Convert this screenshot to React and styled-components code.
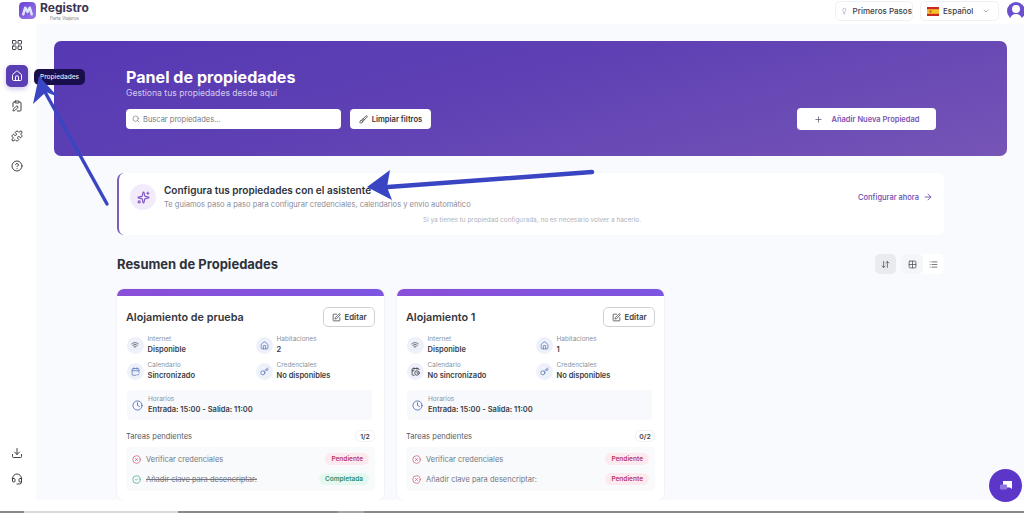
import React from 'react'
import styled, { createGlobalStyle } from 'styled-components'
import {
  ArrowDownUp, ArrowRight, Brush, CalendarCheck2, CalendarClock, ChevronDown, CircleCheck, CircleHelp, CircleX, Clock,
  ClipboardPen, Download, Grid2x2, Headset, House, Key, LayoutGrid, Lightbulb, List, Plus, Puzzle, Search,
  Sparkles, SquarePen, Wifi,
} from 'lucide-react'

const GlobalStyle = createGlobalStyle`
  html, body { margin: 0; padding: 0; background: #fff; }
  body { font-family: Inter, "Liberation Sans", sans-serif; color: #2b2f38; }
  * { box-sizing: border-box; }
`

const Page = styled.div`
  position: relative;
  width: 1024px;
  height: 513px;
  overflow: hidden;
  display: flex;
  flex-direction: column;
  background: #fff;
`

const Header = styled.header`
  height: 24px;
  flex: none;
  display: flex;
  align-items: flex-start;
  justify-content: space-between;
  padding-left: 19px;
`

const Brand = styled.div`
  display: flex;
  gap: 4px;
  padding-top: 2px;
`

const BrandText = styled.div`
  display: flex;
  flex-direction: column;
  align-items: center;
  margin-top: -2px;
`

const BrandName = styled.span`
  font-size: 12px;
  line-height: 15px;
  font-weight: 700;
  color: #3b3450;
`

const BrandSub = styled.span`
  margin-top: 1px;
  font-size: 4.4px;
  line-height: 5px;
  color: #777;
`

const HeaderRight = styled.div`
  display: flex;
  align-items: center;
  padding-top: 1px;
`

const HeaderButton = styled.div`
  height: 20px;
  display: flex;
  align-items: center;
  border: 1px solid #f0f1f5;
  border-radius: 5px;
  background: #fff;
  font-size: 8px;
  font-weight: 500;
  white-space: nowrap;
  color: #3a3d45;
`

const StepsButton = styled(HeaderButton)`
  width: 78px;
  padding-left: 5px;
  gap: 5px;
  margin-right: 7px;
`

const LanguageButton = styled(HeaderButton)`
  width: 79px;
  padding-left: 6px;
  gap: 4px;
  margin-right: 8px;
`

const LanguageChevron = styled.span`
  display: flex;
  margin-left: auto;
  margin-right: 8px;
  color: #888;
`

const Avatar = styled.div`
  width: 17px;
  height: 20px;
  overflow: hidden;
`

const Body = styled.div`
  flex: 1;
  min-height: 0;
  display: flex;
`

const Sidebar = styled.aside`
  width: 36px;
  flex: none;
  display: flex;
  flex-direction: column;
  align-items: center;
  padding: 10px 2px 10px 0;
  background: #fff;
`

const SideItem = styled.div`
  width: 22px;
  height: 22px;
  flex: none;
  display: flex;
  align-items: center;
  justify-content: center;
  margin-bottom: ${(p) => p.$gap ?? 8}px;
  border-radius: 5px;
  color: ${(p) => (p.$active ? '#fff' : '#3d4048')};
  background: ${(p) => (p.$active ? '#5a3eb3' : 'transparent')};
  box-shadow: ${(p) => (p.$active ? '0 2px 5px rgba(90,62,179,.3)' : 'none')};
`

const SideSpacer = styled.div`
  flex: 1;
`

const Tooltip = styled.div`
  position: absolute;
  left: 34px;
  top: 69px;
  height: 16px;
  width: 51px;
  display: flex;
  align-items: center;
  justify-content: center;
  border-radius: 5px;
  background: #1a0f4d;
  color: #e8e6f2;
  font-size: 6.5px;
  font-weight: 500;
`

const Main = styled.main`
  flex: 1;
  min-width: 0;
  height: 476px;
  overflow: hidden;
  padding: 17px 17px 0 18px;
  background: #f9fafd;
`

const Hero = styled.section`
  height: 115px;
  display: flex;
  flex-direction: column;
  padding: 27px 71px 0 72px;
  border-radius: 7px;
  background: linear-gradient(165deg, #5638b4 0%, #5f41b4 45%, #7655b6 100%);
`

const HeroTitle = styled.h1`
  margin: 0;
  font-size: 16.1px;
  line-height: 19px;
  font-weight: 700;
  color: #fff;
`

const HeroSub = styled.p`
  margin: 0;
  font-size: 8.6px;
  line-height: 12px;
  color: #d5cdea;
`

const HeroRow = styled.div`
  display: flex;
  align-items: center;
  margin-top: 9px;
`

const SearchBox = styled.div`
  width: 215px;
  height: 20px;
  display: flex;
  align-items: center;
  gap: 3px;
  padding-left: 6px;
  border-radius: 4px;
  background: #fff;
  font-size: 7.5px;
  color: #777a84;
`

const ClearButton = styled.div`
  height: 20px;
  width: 81px;
  margin-left: 9px;
  display: flex;
  align-items: center;
  justify-content: center;
  gap: 4px;
  border-radius: 4px;
  background: #fff;
  font-size: 7.6px;
  font-weight: 600;
  color: #30333b;
`

const AddButton = styled.div`
  width: 139px;
  height: 22px;
  margin-left: auto;
  display: flex;
  align-items: center;
  justify-content: center;
  gap: 9px;
  border-radius: 4px;
  background: #fff;
  font-size: 7.5px;
  font-weight: 600;
  color: #7d52b0;
`

const AddIcon = styled.span`
  display: flex;
  color: #5b5470;
`

const Content = styled.div`
  margin: 17px 63px 0;
`

const Wizard = styled.section`
  position: relative;
  height: 62px;
  display: flex;
  align-items: flex-start;
  padding: 11px 11px 0 11px;
  border-left: 2px solid #7c5cbc;
  border-radius: 7px;
  background: #fff;
`

const WizardIcon = styled.div`
  width: 26px;
  height: 26px;
  flex: none;
  display: flex;
  align-items: center;
  justify-content: center;
  border-radius: 50%;
  background: #f1ebfb;
  color: #7b4fc4;
`

const WizardText = styled.div`
  margin-left: 8px;
`

const WizardTitle = styled.h2`
  margin: 0;
  font-size: 10px;
  line-height: 13px;
  font-weight: 600;
  color: #2e313a;
`

const WizardDesc = styled.p`
  margin: 2px 0 0;
  font-size: 7.55px;
  line-height: 12px;
  color: #8a8d96;
`

const WizardNote = styled.span`
  position: absolute;
  left: 304px;
  top: 43px;
  font-size: 6.45px;
  line-height: 9px;
  color: #b0b2b9;
`

const WizardLink = styled.div`
  margin-left: auto;
  margin-top: 8px;
  display: flex;
  align-items: center;
  gap: 4px;
  font-size: 7.5px;
  font-weight: 500;
  color: #6a4bb0;
`

const SummaryRow = styled.div`
  display: flex;
  align-items: center;
  justify-content: space-between;
  height: 22px;
  margin-top: 18px;
`

const SummaryTitle = styled.h2`
  margin: 0;
  font-size: 13px;
  font-weight: 700;
  color: #2f323a;
`

const ViewControls = styled.div`
  display: flex;
  align-items: center;
  gap: 6px;
`

const ViewButton = styled.div`
  width: 21px;
  height: 20px;
  display: flex;
  align-items: center;
  justify-content: center;
  border-radius: 5px;
  color: #4b4e56;
  background: ${(p) => p.$tone || 'transparent'};
`

const ViewGroup = styled.div`
  display: flex;
  border-radius: 5px;
  background: #fff;
`

const Cards = styled.div`
  display: grid;
  grid-template-columns: 267px 267px;
  column-gap: 13px;
  margin-top: 14px;
`

const Card = styled.article`
  height: 211px;
  overflow: hidden;
  border-radius: 7px;
  background: #fff;
  box-shadow: 0 0 0 1px #f2f3f7;
`

const CardBar = styled.div`
  height: 7px;
  background: linear-gradient(90deg, #8a4fd8, #7d55e0);
`

const CardBody = styled.div`
  padding: 0 9px;
`

const CardHead = styled.div`
  display: flex;
  align-items: center;
  justify-content: space-between;
  margin-top: 11px;
`

const CardTitle = styled.h3`
  margin: 0;
  font-size: 10.8px;
  font-weight: 600;
  color: #33363e;
`

const EditButton = styled.div`
  width: 52px;
  height: 20px;
  display: flex;
  align-items: center;
  justify-content: center;
  gap: 4px;
  border: 1px solid #cfd1d6;
  border-radius: 5px;
  font-size: 7.8px;
  font-weight: 600;
  color: #3a3d45;
`

const Facts = styled.div`
  display: grid;
  grid-template-columns: 129px 1fr;
  row-gap: 6px;
  margin-top: 8px;
  padding-left: 0.5px;
`

const Fact = styled.div`
  display: flex;
  align-items: center;
  gap: 4px;
`

const FactIcon = styled.div`
  width: 17px;
  height: 17px;
  flex: none;
  display: flex;
  align-items: center;
  justify-content: center;
  border-radius: 50%;
  background: #eef1fa;
  color: ${(p) => p.$tone || '#5775b8'};
`

const FactText = styled.div`
  display: flex;
  flex-direction: column;
`

const FactLabel = styled.span`
  font-size: 6.5px;
  line-height: 9px;
  color: #8e9199;
`

const FactValue = styled.span`
  margin-top: 1px;
  font-size: 7.5px;
  line-height: 10px;
  font-weight: 600;
  color: #3a3d45;
`

const Schedule = styled.div`
  height: 30px;
  margin: 9px 3px 0 1px;
  display: flex;
  align-items: center;
  gap: 5px;
  padding-left: 5px;
  border-radius: 4px;
  background: #f8f9fc;
  color: #5775b8;
`

const TasksHead = styled.div`
  display: flex;
  align-items: center;
  justify-content: space-between;
  height: 12px;
  margin-top: 10px;
  font-size: 7.6px;
  color: #595c64;
`

const TaskCount = styled.span`
  width: 20px;
  height: 12px;
  display: flex;
  align-items: center;
  justify-content: center;
  border: 1px solid #f1f2f5;
  border-radius: 5px;
  font-size: 6.8px;
  font-weight: 600;
  color: #3a3d45;
`

const Tasks = styled.div`
  margin-top: 5px;
  padding: 2px 6px;
  border-radius: 4px;
  background: #f9fafc;
`

const Task = styled.div`
  height: 20px;
  display: flex;
  align-items: center;
  gap: 5px;
  color: ${(p) => (p.$done ? '#41ab85' : '#d0607f')};
`

const TaskName = styled.span`
  font-size: 7.5px;
  color: #73767e;
  text-decoration: ${(p) => (p.$done ? 'line-through' : 'none')};
`

const Badge = styled.span`
  margin-left: auto;
  padding: 0 6px;
  height: 12px;
  display: flex;
  align-items: center;
  border-radius: 6px;
  font-size: 6.5px;
  font-weight: 600;
  color: ${(p) => (p.$done ? '#2f8f6e' : '#b8395f')};
  background: ${(p) => (p.$done ? '#e4f8f0' : '#fdeaee')};
`

const FooterBar = styled.div`
  height: 13px;
  flex: none;
  display: flex;
  flex-direction: column;
  justify-content: flex-end;
`

const FooterLine = styled.div`
  height: 2px;
  background: linear-gradient(90deg, #8a8a8c 24px, #d9d9da 24px, #d9d9da 178px, #8a8a8c 178px, #8a8a8c 338px, #a5a5a6 338px, #a5a5a6 364px, #8a8a8c 364px);
`

const ChatBubble = styled.div`
  position: absolute;
  left: 989px;
  top: 469px;
  width: 33px;
  height: 33px;
  display: flex;
  align-items: center;
  justify-content: center;
  border-radius: 50%;
  background: #5b36c9;
`

const Annotations = styled.svg`
  position: absolute;
  inset: 0;
  pointer-events: none;
`

const LogoMark = () => (
  <svg width="17" height="17" viewBox="0 0 18 18">
    <defs>
      <linearGradient id="logoBg" x1="0" y1="0" x2="1" y2="1">
        <stop offset="0" stopColor="#6a3fd6" />
        <stop offset="1" stopColor="#9b7be8" />
      </linearGradient>
    </defs>
    <rect width="18" height="18" rx="4.5" fill="url(#logoBg)" />
    <path d="M4.5 13 6.6 6 9 10.5 11.4 6 13.5 13" fill="none" stroke="#dfe6ff" strokeWidth="2.6" strokeLinejoin="round" strokeLinecap="round" />
  </svg>
)

const Flag = () => (
  <svg width="12" height="9" viewBox="0 0 12 9">
    <rect width="12" height="9" fill="#c8281e" />
    <rect y="2.2" width="12" height="4.6" fill="#f6c02c" />
    <rect x="2.6" y="3.4" width="1.8" height="2.2" fill="#b5522a" />
  </svg>
)

const UserAvatar = () => (
  <svg width="18" height="20" viewBox="0 0 18 20">
    <circle cx="9" cy="10" r="9" fill="#6a4fd0" />
    <circle cx="9" cy="8" r="4" fill="#fff" />
    <path d="M3 18c.8-3.4 3-5 6-5s5.2 1.6 6 5v2H3z" fill="#fff" />
  </svg>
)

const properties = [
  {
    name: 'Alojamiento de prueba', rooms: '2', calendar: 'Sincronizado', CalendarIcon: CalendarCheck2, calendarTone: '#5775b8', count: '1/2',
    tasks: [
      { name: 'Verificar credenciales', done: false },
      { name: 'Añadir clave para desencriptar:', done: true },
    ],
  },
  {
    name: 'Alojamiento 1', rooms: '1', calendar: 'No sincronizado', CalendarIcon: CalendarClock, calendarTone: '#30333b', count: '0/2',
    tasks: [
      { name: 'Verificar credenciales', done: false },
      { name: 'Añadir clave para desencriptar:', done: false },
    ],
  },
]

const PropertyCard = ({ data }) => {
  const { CalendarIcon } = data
  return (
    <Card>
      <CardBar />
      <CardBody>
        <CardHead>
          <CardTitle>{data.name}</CardTitle>
          <EditButton><SquarePen size={9} />Editar</EditButton>
        </CardHead>
        <Facts>
          <Fact>
            <FactIcon $tone="#3d4048"><Wifi size={8} /></FactIcon>
            <FactText><FactLabel>Internet</FactLabel><FactValue>Disponible</FactValue></FactText>
          </Fact>
          <Fact>
            <FactIcon><House size={9} /></FactIcon>
            <FactText><FactLabel>Habitaciones</FactLabel><FactValue>{data.rooms}</FactValue></FactText>
          </Fact>
          <Fact>
            <FactIcon $tone={data.calendarTone}><CalendarIcon size={9} /></FactIcon>
            <FactText><FactLabel>Calendario</FactLabel><FactValue>{data.calendar}</FactValue></FactText>
          </Fact>
          <Fact>
            <FactIcon><Key size={9} /></FactIcon>
            <FactText><FactLabel>Credenciales</FactLabel><FactValue>No disponibles</FactValue></FactText>
          </Fact>
        </Facts>
        <Schedule>
          <Clock size={11} />
          <FactText><FactLabel>Horarios</FactLabel><FactValue>Entrada: 15:00 - Salida: 11:00</FactValue></FactText>
        </Schedule>
        <TasksHead>Tareas pendientes<TaskCount>{data.count}</TaskCount></TasksHead>
        <Tasks>
          {data.tasks.map((task) => (
            <Task key={task.name} $done={task.done}>
              {task.done ? <CircleCheck size={9} /> : <CircleX size={9} />}
              <TaskName $done={task.done}>{task.name}</TaskName>
              <Badge $done={task.done}>{task.done ? 'Completada' : 'Pendiente'}</Badge>
            </Task>
          ))}
        </Tasks>
      </CardBody>
    </Card>
  )
}

const App = () => (
  <Page>
    <GlobalStyle />
    <Header>
      <Brand>
        <LogoMark />
        <BrandText>
          <BrandName>Registro</BrandName>
          <BrandSub>Parte Viajeros</BrandSub>
        </BrandText>
      </Brand>
      <HeaderRight>
        <StepsButton><Lightbulb size={10} color="#a08ad0" />Primeros Pasos</StepsButton>
        <LanguageButton>
          <Flag />Español
          <LanguageChevron><ChevronDown size={8} /></LanguageChevron>
        </LanguageButton>
        <Avatar><UserAvatar /></Avatar>
      </HeaderRight>
    </Header>
    <Body>
      <Sidebar>
        <SideItem $gap={9}><LayoutGrid size={12} /></SideItem>
        <SideItem $active><House size={12} /></SideItem>
        <SideItem><ClipboardPen size={12} /></SideItem>
        <SideItem><Puzzle size={12} /></SideItem>
        <SideItem><CircleHelp size={12} /></SideItem>
        <SideSpacer />
        <SideItem $gap={4}><Download size={12} /></SideItem>
        <SideItem $gap={0}><Headset size={12} /></SideItem>
      </Sidebar>
      <Main>
        <Hero>
          <HeroTitle>Panel de propiedades</HeroTitle>
          <HeroSub>Gestiona tus propiedades desde aquí</HeroSub>
          <HeroRow>
            <SearchBox><Search size={8} />Buscar propiedades...</SearchBox>
            <ClearButton><Brush size={9} />Limpiar filtros</ClearButton>
            <AddButton><AddIcon><Plus size={9} /></AddIcon>Añadir Nueva Propiedad</AddButton>
          </HeroRow>
        </Hero>
        <Content>
          <Wizard>
            <WizardIcon><Sparkles size={13} /></WizardIcon>
            <WizardText>
              <WizardTitle>Configura tus propiedades con el asistente</WizardTitle>
              <WizardDesc>Te guiamos paso a paso para configurar credenciales, calendarios y envío automático</WizardDesc>
            </WizardText>
            <WizardNote>Si ya tienes tu propiedad configurada, no es necesario volver a hacerlo.</WizardNote>
            <WizardLink>Configurar ahora<ArrowRight size={10} /></WizardLink>
          </Wizard>
          <SummaryRow>
            <SummaryTitle>Resumen de Propiedades</SummaryTitle>
            <ViewControls>
              <ViewButton $tone="#e9ebef"><ArrowDownUp size={9} /></ViewButton>
              <ViewGroup>
                <ViewButton $tone="#f5f6f9"><Grid2x2 size={9} /></ViewButton>
                <ViewButton><List size={9} /></ViewButton>
              </ViewGroup>
            </ViewControls>
          </SummaryRow>
          <Cards>
            {properties.map((item) => <PropertyCard key={item.name} data={item} />)}
          </Cards>
        </Content>
      </Main>
    </Body>
    <FooterBar><FooterLine /></FooterBar>
    <Tooltip>Propiedades</Tooltip>
    <ChatBubble>
      <svg width="14" height="12" viewBox="0 0 14 12">
        <path d="M4 1h9v8l-2-1.6H4z" fill="#fff" />
        <rect x="1" y="4.5" width="7" height="5" rx="1" fill="#8f78e0" />
      </svg>
    </ChatBubble>
    <Annotations width="1024" height="513" viewBox="0 0 1024 513">
      <path d="M107 204 45 92" stroke="#3a45c4" strokeWidth="3.4" strokeLinecap="round" />
      <path d="M39 76 58 97 46 92 33 104z" fill="#3a45c4" />
      <path d="M592 172 388 187" stroke="#3a45c4" strokeWidth="4.4" strokeLinecap="round" />
      <path d="M367 187 390 170 387 187 392 200z" fill="#3a45c4" />
    </Annotations>
  </Page>
)

export default App
